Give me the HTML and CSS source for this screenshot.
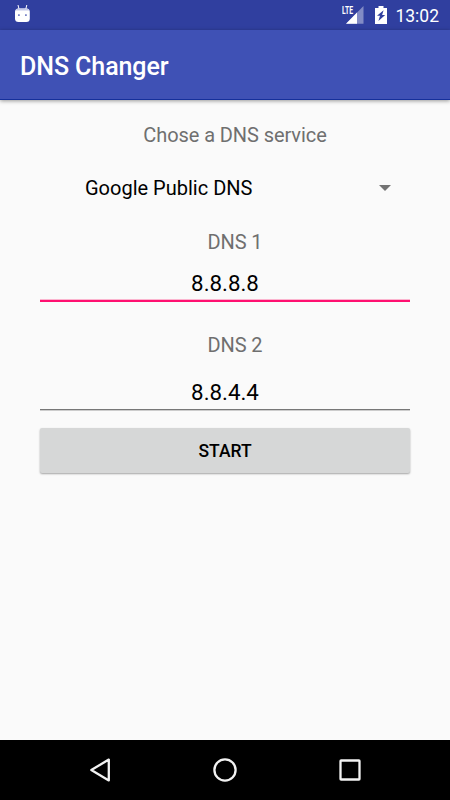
FILE: index.html
```html
<!DOCTYPE html>
<html lang="en">
<head>
<meta charset="utf-8">
<title>DNS Changer</title>
<link rel="stylesheet" href="styles.css">
</head>
<body>
<div class="status">
  <svg class="droid" width="16" height="18" viewBox="0 0 16 18">
    <path d="M4 0l1 4M12.800 0l-1 4" stroke="#fff" stroke-width="1"/>
    <path d="M1 7Q1 3.500 4.500 3.500h8q3.300 0 3.300 3.500v6.500q0 3.500-3.500 3.500h-7.800Q1 17 1 13.500z" fill="#fff"/>
    <path d="M1.500 5.600Q2.300 3.500 4.500 3.500h8q2 0 2.800 2.100z" fill="#c5cae9"/>
    <path d="M4 9.200h1.800V11H4zM11 9.200h1.800V11H11z" fill="#7984c7"/>
  </svg>
  <div class="indicators">
    <div class="signal">
      <svg width="24" height="20" viewBox="0 0 24 20">
        <path d="M23.500 1v17.700H6z" fill="#fff" opacity=".4"/>
        <path d="M17 7.500v11.200H6z" fill="#fff"/>
      </svg>
      <span class="lte">LTE</span>
    </div>
    <svg class="battery" width="12" height="18" viewBox="0 0 12 18">
      <path d="M3.500 0h5v2H12v16H0V2h3.500z" fill="#fff"/>
      <path d="M8.600 4.300L2 9.800h3l-1.600 5.200L10.200 9H7.100z" fill="#303f9f"/>
    </svg>
    <span class="clock">13:02</span>
  </div>
</div>
<header class="appbar"><h1>DNS Changer</h1></header>
<main class="content">
  <div class="label choose">Chose a DNS service</div>
  <div class="spinner">
    <span>Google Public DNS</span>
    <svg width="12" height="6" viewBox="0 0 12 6"><path d="M0 0h12L6 6z" fill="#737373"/></svg>
  </div>
  <div class="label first">DNS 1</div>
  <div class="field focused">8.8.8.8</div>
  <div class="label second">DNS 2</div>
  <div class="field">8.8.4.4</div>
  <button class="start" type="button">START</button>
</main>
<nav class="navbar">
  <svg width="26" height="26" viewBox="0 0 26 26"><path d="M21.800 2.600v20.800L4.300 13z"/></svg>
  <svg width="26" height="26" viewBox="0 0 26 26"><circle cx="13" cy="13" r="10.600"/></svg>
  <svg width="26" height="26" viewBox="0 0 26 26"><rect x="3.500" y="3.500" width="19" height="19" rx=".6"/></svg>
</nav>
</body>
</html>
```
FILE: styles.css
```css
* {
  box-sizing: border-box;
}

body {
  margin: 0;
  height: 800px;
  display: flex;
  flex-direction: column;
  overflow: hidden;
  background: #fafafa;
  color: #000;
  font-family: Roboto, sans-serif;
}

.status {
  height: 30px;
  flex: none;
  display: flex;
  justify-content: space-between;
  padding: 5px 11px 0 14px;
  background: #303f9f;
  color: #fff;
}

.droid {
  display: block;
}

.indicators {
  display: flex;
}

.signal {
  position: relative;
  width: 24px;
  margin-right: 11px;
}

.signal svg {
  display: block;
}

.lte {
  position: absolute;
  left: 2px;
  top: 0;
  font-size: 10px;
  line-height: 11px;
  font-weight: 700;
  transform: scaleX(0.68);
  transform-origin: left;
}

.battery {
  display: block;
  margin-top: 1px;
  margin-right: 8px;
}

.clock {
  font-size: 17.5px;
  line-height: 22px;
}

.appbar {
  height: 70px;
  flex: none;
  display: flex;
  align-items: center;
  padding: 4px 20px 0;
  background: #3f51b5;
  border-bottom: 1px solid #15309b;
  box-shadow: 0 1px 4px rgba(0, 0, 0, 0.4);
}

h1 {
  margin: 0;
  font-size: 25px;
  line-height: 30px;
  font-weight: 500;
  letter-spacing: -0.08px;
}

.appbar h1 {
  color: #fff;
}

.content {
  flex: 1;
  display: flex;
  flex-direction: column;
  padding: 21px 40px 0;
}

.label {
  height: 28px;
  padding-left: 20px;
  text-align: center;
  font-size: 20px;
  line-height: 28px;
  letter-spacing: -0.08px;
  color: #6f6f6f;
}

.spinner {
  display: flex;
  align-items: center;
  justify-content: space-between;
  height: 28px;
  margin-top: 25px;
  padding: 0 19px 0 45px;
  font-size: 20px;
  line-height: 28px;
}

.first {
  margin-top: 26px;
}

.field {
  height: 46px;
  padding-top: 12px;
  text-align: center;
  font-size: 22.3px;
  line-height: 30px;
  border-bottom: 1px solid #777;
  box-shadow: 0 1px 0 #ccc;
}

.focused {
  border-bottom: 2px solid #ff1070;
  box-shadow: inset 0 -1px 0 #fbb5cf;
}

.second {
  margin-top: 29px;
}

.second + .field {
  height: 51px;
  padding-top: 18px;
}

.start {
  height: 45px;
  margin-top: 18px;
  padding: 1px 0 0;
  border: 0;
  border-radius: 2px;
  background: #d6d7d7;
  box-shadow: 0 1px 2px rgba(0, 0, 0, 0.35);
  color: #000;
  font: 500 17.5px/44px Roboto, sans-serif;
}

.navbar {
  height: 60px;
  flex: none;
  display: flex;
  align-items: center;
  justify-content: space-between;
  padding: 0 87px;
  background: #000;
}

.navbar svg {
  fill: none;
  stroke: #f2f2f2;
  stroke-width: 2.3;
  stroke-linejoin: round;
}
```
